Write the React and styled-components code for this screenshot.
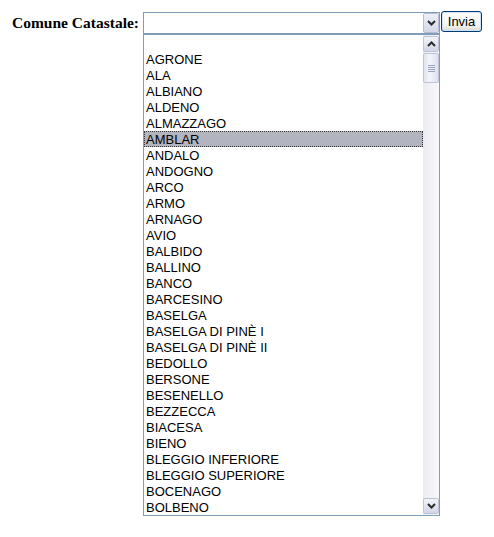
import React from "react";
import styled, { createGlobalStyle } from "styled-components";

const comuni = [
  "",
  "AGRONE",
  "ALA",
  "ALBIANO",
  "ALDENO",
  "ALMAZZAGO",
  "AMBLAR",
  "ANDALO",
  "ANDOGNO",
  "ARCO",
  "ARMO",
  "ARNAGO",
  "AVIO",
  "BALBIDO",
  "BALLINO",
  "BANCO",
  "BARCESINO",
  "BASELGA",
  "BASELGA DI PINÈ I",
  "BASELGA DI PINÈ II",
  "BEDOLLO",
  "BERSONE",
  "BESENELLO",
  "BEZZECCA",
  "BIACESA",
  "BIENO",
  "BLEGGIO INFERIORE",
  "BLEGGIO SUPERIORE",
  "BOCENAGO",
  "BOLBENO",
];

const GlobalStyle = createGlobalStyle`
  body {
    margin: 8px;
    background: #fff;
  }
`;

function Chevron({ up }) {
  return (
    <svg width="9" height="6" viewBox="0 0 9 6">
      <path
        d={up ? "M1 5 L4.5 1.5 L8 5" : "M1 1 L4.5 4.5 L8 1"}
        fill="none"
        stroke="#2b2b2b"
        strokeWidth="2"
      />
    </svg>
  );
}

function App() {
  const selected = "AMBLAR";

  return (
    <>
      <GlobalStyle />
      <Row>
        <Label>Comune Catastale:</Label>
        <SelectColumn>
          <SelectBox>
            <SelectValue />
            <ArrowButton>
              <Chevron />
            </ArrowButton>
          </SelectBox>
          <DropList>
            <ItemList>
              {comuni.map((c, i) => (
                <ListItem key={i} $active={c === selected}>
                  {c}
                </ListItem>
              ))}
            </ItemList>
            <Scrollbar>
              <ScrollButton>
                <Chevron up />
              </ScrollButton>
              <Thumb>
                <Grip />
              </Thumb>
              <Track />
              <ScrollButton>
                <Chevron />
              </ScrollButton>
            </Scrollbar>
          </DropList>
        </SelectColumn>
        <SubmitButton type="submit">Invia</SubmitButton>
      </Row>
    </>
  );
}

export default App;

const Row = styled.div`
  display: flex;
  align-items: flex-start;
  padding-top: 3px;
`;

const Label = styled.div`
  width: 131px;
  padding-right: 4px;
  margin-top: 1px;
  text-align: right;
  font-family: "Liberation Serif", "Times New Roman", serif;
  font-weight: bold;
  font-size: 15.5px;
  line-height: 22px;
  color: #000;
  white-space: nowrap;
`;

const SelectColumn = styled.div`
  display: flex;
  flex-direction: column;
  width: 297px;
  margin-top: 1px;
`;

const SelectBox = styled.div`
  box-sizing: border-box;
  display: flex;
  width: 100%;
  height: 22px;
  border: 1px solid #7f9db9;
  background: #fff;
`;

const SelectValue = styled.div`
  flex: 1;
`;

const ArrowButton = styled.div`
  box-sizing: border-box;
  width: 16px;
  height: 20px;
  display: flex;
  align-items: center;
  justify-content: center;
  border: 1px solid #b4bdd4;
  border-radius: 2px;
  background: linear-gradient(to bottom, #eef0f8, #d3d8e8);
`;

const DropList = styled.div`
  box-sizing: border-box;
  width: 100%;
  height: 482px;
  border: 1px solid #7f9db9;
  background: #fff;
  display: flex;
  overflow: hidden;
`;

const ItemList = styled.div`
  flex: 1;
  display: flex;
  flex-direction: column;
`;

const ListItem = styled.div`
  box-sizing: border-box;
  flex: none;
  height: 16px;
  padding: 1px 0 0 2px;
  font-family: "Liberation Sans", Arial, sans-serif;
  font-size: 13px;
  line-height: 16px;
  color: #000;
  white-space: nowrap;
  background: ${(p) => (p.$active ? "#b2b4bf" : "transparent")};
  outline: ${(p) => (p.$active ? "1px dotted #333" : "none")};
  outline-offset: -1px;
`;

const Scrollbar = styled.div`
  width: 16px;
  display: flex;
  flex-direction: column;
  background: linear-gradient(to right, #ebebf3, #f9f9fb);
`;

const ScrollButton = styled.div`
  box-sizing: border-box;
  flex: none;
  height: 16px;
  margin: 1px 0;
  display: flex;
  align-items: center;
  justify-content: center;
  border: 1px solid #bcc3d8;
  border-radius: 2px;
  background: linear-gradient(to bottom, #f3f4fa, #d0d5e6);
`;

const Thumb = styled.div`
  box-sizing: border-box;
  flex: none;
  height: 30px;
  display: flex;
  align-items: center;
  justify-content: center;
  border: 1px solid #bcc3d8;
  border-radius: 2px;
  background: linear-gradient(to right, #dfe3ef, #f4f5fa 40%, #dde1ee);
`;

const Grip = styled.div`
  width: 7px;
  height: 7px;
  background: repeating-linear-gradient(
    to bottom,
    #9aa3bd 0,
    #9aa3bd 1px,
    transparent 1px,
    transparent 2px
  );
`;

const Track = styled.div`
  flex: 1;
`;

const SubmitButton = styled.button`
  box-sizing: border-box;
  width: 41px;
  height: 21px;
  margin-left: 1px;
  padding: 0;
  border: 1px solid #003c74;
  border-radius: 3px;
  background: linear-gradient(to bottom, #ffffff, #f3f3ee 70%, #dcdad0);
  box-shadow: inset 0 0 0 1px #cde2fb;
  font-family: "Liberation Sans", Arial, sans-serif;
  font-size: 13px;
  color: #000;
  cursor: pointer;
`;
